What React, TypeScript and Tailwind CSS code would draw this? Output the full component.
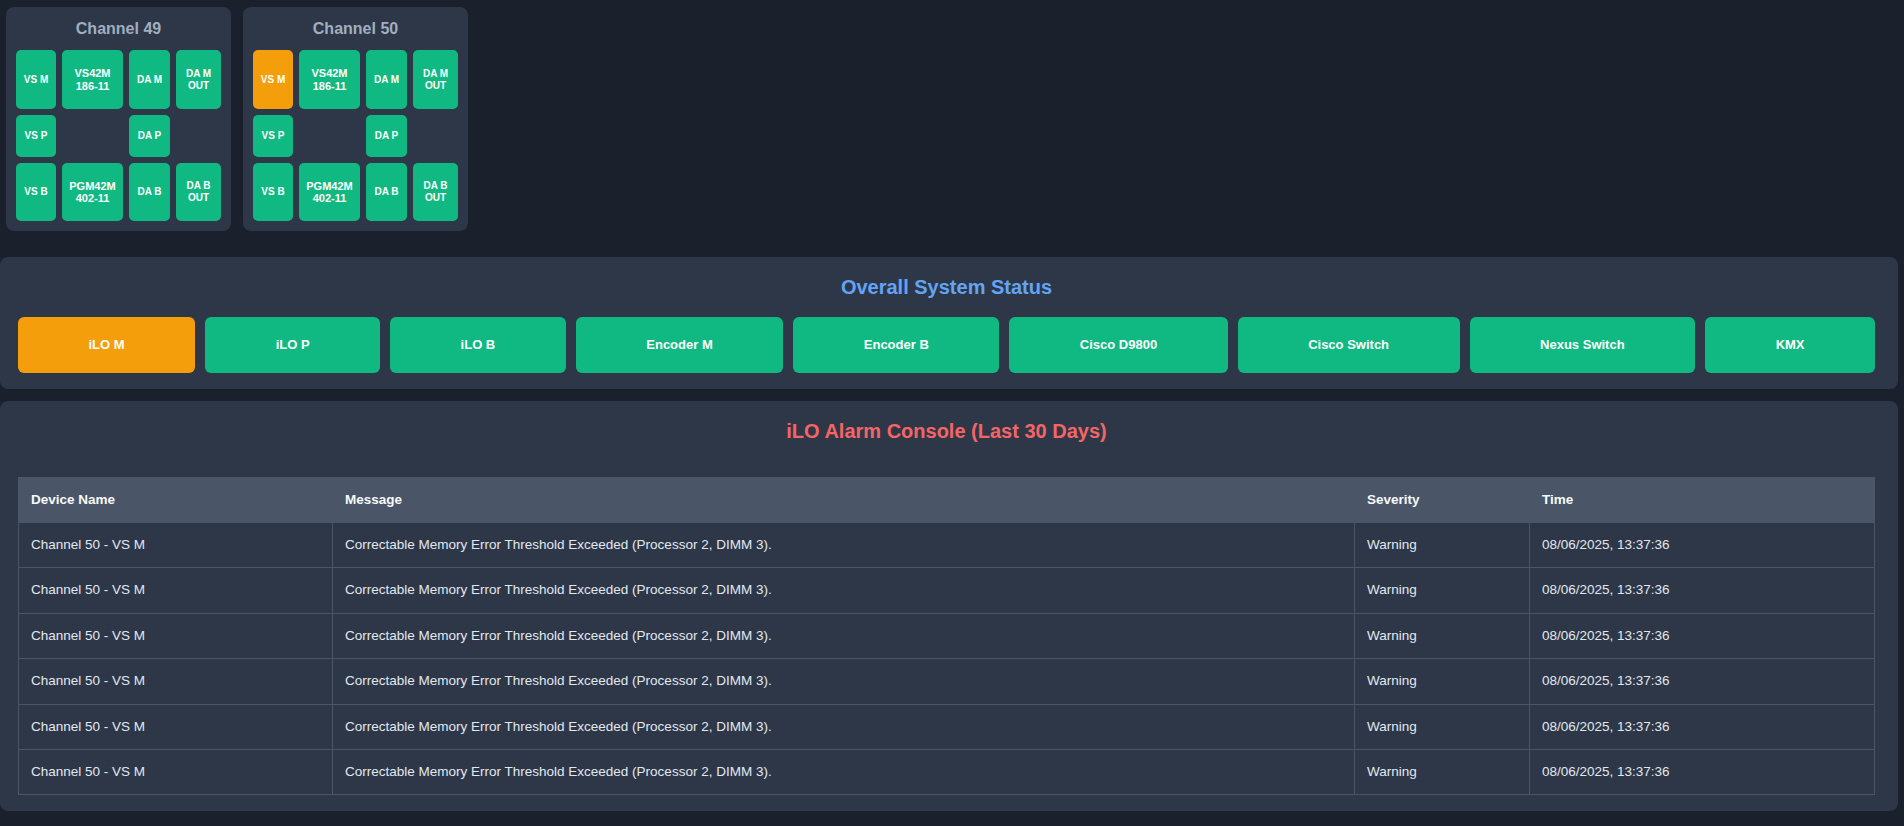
import React from "react";

type Box = { label: string[]; big?: boolean; alert?: boolean } | null;

const channels: { name: string; boxes: Box[] }[] = [
	{
		name: "Channel 49",
		boxes: [
			{ label: ["VS M"] },
			{ label: ["VS42M", "186-11"], big: true },
			{ label: ["DA M"] },
			{ label: ["DA M", "OUT"] },
			{ label: ["VS P"] },
			null,
			{ label: ["DA P"] },
			null,
			{ label: ["VS B"] },
			{ label: ["PGM42M", "402-11"], big: true },
			{ label: ["DA B"] },
			{ label: ["DA B", "OUT"] },
		],
	},
	{
		name: "Channel 50",
		boxes: [
			{ label: ["VS M"], alert: true },
			{ label: ["VS42M", "186-11"], big: true },
			{ label: ["DA M"] },
			{ label: ["DA M", "OUT"] },
			{ label: ["VS P"] },
			null,
			{ label: ["DA P"] },
			null,
			{ label: ["VS B"] },
			{ label: ["PGM42M", "402-11"], big: true },
			{ label: ["DA B"] },
			{ label: ["DA B", "OUT"] },
		],
	},
];

const systems = [
	{ name: "iLO M", alert: true },
	{ name: "iLO P" },
	{ name: "iLO B" },
	{ name: "Encoder M" },
	{ name: "Encoder B" },
	{ name: "Cisco D9800" },
	{ name: "Cisco Switch" },
	{ name: "Nexus Switch" },
	{ name: "KMX" },
];

const alarms = Array.from({ length: 6 }, () => ({
	device: "Channel 50 - VS M",
	message: "Correctable Memory Error Threshold Exceeded (Processor 2, DIMM 3).",
	severity: "Warning",
	time: "08/06/2025, 13:37:36",
}));

function ChannelCard({ name, boxes }: { name: string; boxes: Box[] }) {
	return (
		<div className="w-[225px] rounded-lg bg-[#2d3748] px-[10px] pt-[10px] pb-[10px]">
			<h2 className="mb-[9px] text-center text-base font-bold leading-6 text-[#a0aec0]">
				{name}
			</h2>
			<div className="grid grid-cols-[40px_61px_41px_45px] grid-rows-[59px_42px_58px] gap-[6px]">
				{boxes.map((box, i) =>
					box ? (
						<div
							key={i}
							className={`flex flex-col items-center justify-center rounded-[5px] text-center font-bold text-white ${
								box.big ? "text-[11px] leading-[12.5px]" : "text-[10px] leading-[12px]"
							} ${box.alert ? "bg-[#f59e0b]" : "bg-[#10b981]"}`}
						>
							{box.label.map((l) => (
								<span key={l}>{l}</span>
							))}
						</div>
					) : (
						<div key={i} />
					),
				)}
			</div>
		</div>
	);
}

export default function App() {
	return (
		<div className="min-h-screen bg-[#1a202c] font-['Liberation_Sans',Arial,sans-serif] pb-4">
			<div className="flex items-start gap-[12px] pl-[6px] pt-[7px]">
				{channels.map((c) => (
					<ChannelCard key={c.name} name={c.name} boxes={c.boxes} />
				))}
			</div>

			<div className="mt-[26px] mr-[6px] rounded-lg bg-[#2d3748] pt-4 pb-4 pl-[18px] pr-[23px]">
				<h2 className="text-center text-xl font-bold text-[#63a4f5]">
					Overall System Status
				</h2>
				<div className="mt-4 flex gap-[10px]">
					{systems.map((s) => (
						<div
							key={s.name}
							className={`flex h-[56px] flex-auto items-center justify-center rounded-md px-4 text-[13px] font-bold text-white ${
								s.alert ? "bg-[#f59e0b]" : "bg-[#10b981]"
							}`}
						>
							{s.name}
						</div>
					))}
				</div>
			</div>

			<div className="mt-[12px] mr-[6px] rounded-lg bg-[#2d3748] pt-4 pb-4 pl-[18px] pr-[23px]">
				<h2 className="mb-[32px] text-center text-xl font-bold text-[#f56565]">
					iLO Alarm Console (Last 30 Days)
				</h2>
				<table className="w-full table-fixed border-collapse text-left text-[13.5px]">
					<colgroup>
						<col className="w-[314px]" />
						<col className="w-[1022px]" />
						<col className="w-[175px]" />
						<col />
					</colgroup>
					<thead>
						<tr className="h-[45px] bg-[#4a5568]">
							<th className="border border-[#4a5568] px-[12px] font-bold text-[#f7fafc]">
								Device Name
							</th>
							<th className="border border-[#4a5568] px-[12px] font-bold text-[#f7fafc]">
								Message
							</th>
							<th className="border border-[#4a5568] px-[12px] font-bold text-[#f7fafc]">
								Severity
							</th>
							<th className="border border-[#4a5568] px-[12px] font-bold text-[#f7fafc]">
								Time
							</th>
						</tr>
					</thead>
					<tbody>
						{alarms.map((a, i) => (
							<tr key={i} className="h-[45.4px] text-[#e2e8f0]">
								<td className="border border-[#4a5568] px-[12px]">{a.device}</td>
								<td className="border border-[#4a5568] px-[12px]">{a.message}</td>
								<td className="border border-[#4a5568] px-[12px]">{a.severity}</td>
								<td className="border border-[#4a5568] px-[12px]">{a.time}</td>
							</tr>
						))}
					</tbody>
				</table>
			</div>
		</div>
	);
}
